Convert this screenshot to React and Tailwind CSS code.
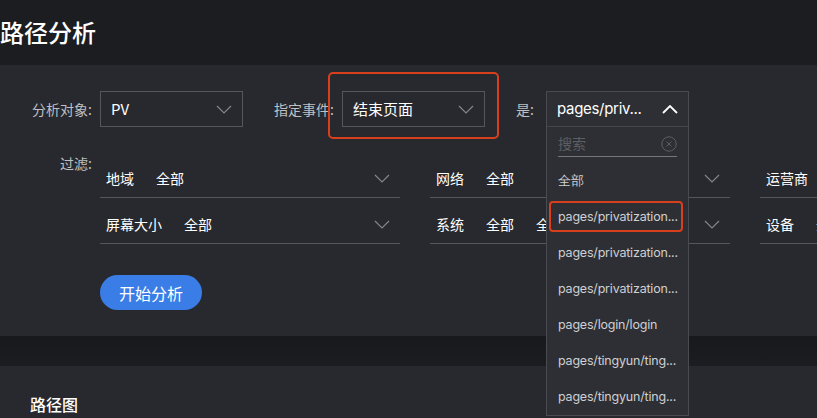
import { useState } from 'react'

const font = 'font-["Noto_Sans_CJK_SC","Noto_Sans",sans-serif]'

const Chevron = ({ up = false, className = '' }) => (
    <svg width="16" height="9" viewBox="0 0 16 9" className={`shrink-0 ${className}`}>
        <polyline
            points={up ? '1,8 8,1 15,8' : '1,1 8,8 15,1'}
            fill="none"
            stroke="currentColor"
            strokeWidth={up ? 1.8 : 1.2}
        />
    </svg>
)

const Select = ({ value }) => (
    <div className="w-[143px] h-[36px] border border-[#55565b] flex items-center justify-between pl-[10px] pr-[10px]">
        <span className="text-[15px] text-white">{value}</span>
        <Chevron className="text-[#85868a]" />
    </div>
)

// one filter cell: name, value(s) and a chevron over an underline
const FilterItem = ({ name, values }) => (
    <div className="w-[300px] shrink-0 h-[46px] pt-2 border-b border-[#55565b] flex items-center gap-[22px] pl-[6px] pr-[10px]">
        <span className="text-[14px] text-white whitespace-nowrap">{name}</span>
        {values.map((v, i) => (
            <span key={i} className="text-[14px] text-white whitespace-nowrap">{v}</span>
        ))}
        <Chevron className="text-[#85868a] ml-auto" />
    </div>
)

const options = [
    '全部',
    'pages/privatization...',
    'pages/privatization...',
    'pages/privatization...',
    'pages/login/login',
    'pages/tingyun/ting...',
    'pages/tingyun/ting...',
]

const App = () => {
    const [query, setQuery] = useState('')

    return (
        <div className={`w-[817px] h-[418px] overflow-hidden bg-[#1c1d21] relative ${font}`}>
            {/* Header */}
            <div className="h-[65px] flex items-center">
                <h1 className="text-[24px] text-white font-medium leading-none -mt-[2px]">路径分析</h1>
            </div>

            {/* Filter panel */}
            <div className="bg-[#28292e] h-[271px] pt-[26px] pl-[30px]">
                <div className="flex items-center">
                    <span className="w-[62px] shrink-0 text-right text-[14px] text-[#bfc0c4] whitespace-nowrap">分析对象:</span>
                    <div className="ml-[8px]">
                        <Select value="PV" />
                    </div>
                    <span className="ml-[31px] text-[14px] text-[#bfc0c4] whitespace-nowrap">指定事件:</span>
                    <div className="ml-[8px] relative">
                        <div className="absolute -left-[14px] -top-[19px] w-[171px] h-[67px] border-2 border-[#d8401d] rounded-[5px]"></div>
                        <Select value="结束页面" />
                    </div>
                    <span className="ml-[31px] text-[14px] text-[#bfc0c4]">是:</span>
                    <div className="ml-[8px] w-[143px] h-[36px]"></div>
                </div>

                <div className="flex mt-[25px]">
                    <span className="w-[62px] shrink-0 text-right text-[14px] text-[#bfc0c4] leading-[22px] whitespace-nowrap">过滤:</span>
                    <div className="ml-[8px] flex flex-col shrink-0">
                        <div className="flex gap-[30px]">
                            <FilterItem name="地域" values={['全部']} />
                            <FilterItem name="网络" values={['全部']} />
                            <FilterItem name="运营商" values={['全部']} />
                        </div>
                        <div className="flex gap-[30px]">
                            <FilterItem name="屏幕大小" values={['全部']} />
                            <FilterItem name="系统" values={['全部', '全部']} />
                            <FilterItem name="设备" values={['全部']} />
                        </div>
                        <button className="mt-[31px] w-[102px] h-[35px] rounded-full bg-[#3a7de6] text-white text-[16px]">
                            开始分析
                        </button>
                    </div>
                </div>
            </div>

            {/* Gap band */}
            <div className="h-[30px] bg-gradient-to-b from-[#18191c] to-[#1c1d21]"></div>

            {/* Path chart panel */}
            <div className="bg-[#28292e] h-[60px] pl-[30px] pt-[26px]">
                <h2 className="text-[16px] text-white font-medium leading-[24px]">路径图</h2>
            </div>

            {/* Open dropdown overlay */}
            <div className="absolute left-[546px] top-[91px] w-[143px] h-[325px] bg-[#2e2f34] border border-[#4a4b50] z-10">
                <div className="h-[35px] border-b border-[#45464b] flex items-center justify-between pl-[10px] pr-[10px]">
                    <span className="text-[15px] text-white font-['Inter',sans-serif] tracking-[-0.3px]">pages/priv...</span>
                    <Chevron up className="text-white" />
                </div>
                <div className="mx-[11px] mt-[4px] h-[26px] border-b border-[#75767a] flex items-center">
                    <input
                        value={query}
                        onChange={(e) => setQuery(e.target.value)}
                        placeholder="搜索"
                        className="flex-1 min-w-0 bg-transparent outline-none text-[14px] text-white placeholder:text-[#5d5e63]"
                    />
                    <svg width="16" height="16" viewBox="0 0 16 16" className="text-[#5d5e63]">
                        <circle cx="8" cy="8" r="7.2" fill="none" stroke="currentColor" strokeWidth="1" />
                        <path d="M5.5 5.5 L10.5 10.5 M10.5 5.5 L5.5 10.5" stroke="currentColor" strokeWidth="1" />
                    </svg>
                </div>
                <div className="flex flex-col mt-[6px]">
                    {options.map((opt, i) => (
                        <div key={i} className="h-[36px] flex items-center pl-[11px] pr-[4px] relative">
                            {i === 1 && (
                                <div className="absolute left-[2px] top-[2px] w-[134px] h-[31px] border-2 border-[#d8401d] rounded-[4px]"></div>
                            )}
                            <span className="text-[12.5px] text-[#cfd0d3] font-['Inter',sans-serif] tracking-[-0.2px] whitespace-nowrap">{opt}</span>
                        </div>
                    ))}
                </div>
            </div>
        </div>
    )
}

export default App
